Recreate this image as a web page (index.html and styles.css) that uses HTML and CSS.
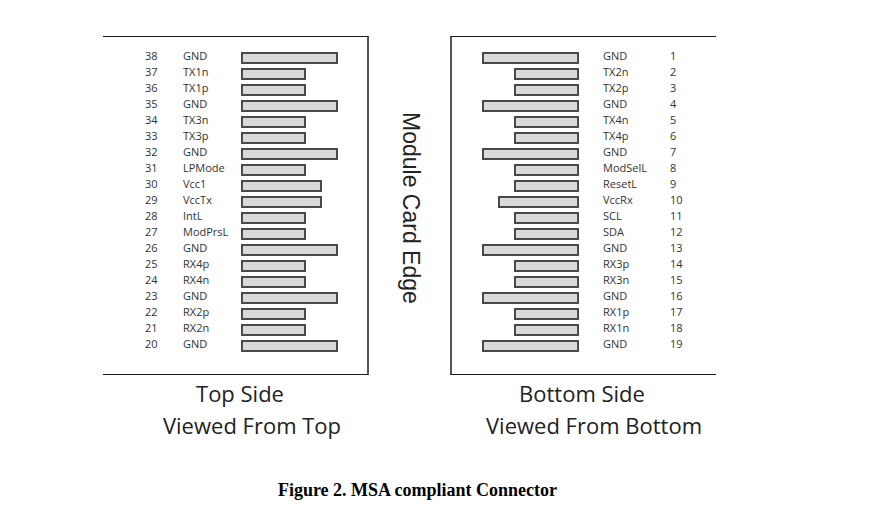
FILE: index.html
```html
<!DOCTYPE html>
<html lang="en">
<head>
<meta charset="utf-8">
<title>MSA compliant Connector</title>
<link rel="stylesheet" href="styles.css">
</head>
<body>
<div class="figure">
  <div class="diagram">
    <div class="side side-top">
      <div class="row"><span class="num">38</span><span class="name">GND</span><span class="bar long"></span></div>
      <div class="row"><span class="num">37</span><span class="name">TX1n</span><span class="bar short"></span></div>
      <div class="row"><span class="num">36</span><span class="name">TX1p</span><span class="bar short"></span></div>
      <div class="row"><span class="num">35</span><span class="name">GND</span><span class="bar long"></span></div>
      <div class="row"><span class="num">34</span><span class="name">TX3n</span><span class="bar short"></span></div>
      <div class="row"><span class="num">33</span><span class="name">TX3p</span><span class="bar short"></span></div>
      <div class="row"><span class="num">32</span><span class="name">GND</span><span class="bar long"></span></div>
      <div class="row"><span class="num">31</span><span class="name">LPMode</span><span class="bar short"></span></div>
      <div class="row"><span class="num">30</span><span class="name">Vcc1</span><span class="bar mid"></span></div>
      <div class="row"><span class="num">29</span><span class="name">VccTx</span><span class="bar mid"></span></div>
      <div class="row"><span class="num">28</span><span class="name">IntL</span><span class="bar short"></span></div>
      <div class="row"><span class="num">27</span><span class="name">ModPrsL</span><span class="bar short"></span></div>
      <div class="row"><span class="num">26</span><span class="name">GND</span><span class="bar long"></span></div>
      <div class="row"><span class="num">25</span><span class="name">RX4p</span><span class="bar short"></span></div>
      <div class="row"><span class="num">24</span><span class="name">RX4n</span><span class="bar short"></span></div>
      <div class="row"><span class="num">23</span><span class="name">GND</span><span class="bar long"></span></div>
      <div class="row"><span class="num">22</span><span class="name">RX2p</span><span class="bar short"></span></div>
      <div class="row"><span class="num">21</span><span class="name">RX2n</span><span class="bar short"></span></div>
      <div class="row"><span class="num">20</span><span class="name">GND</span><span class="bar long"></span></div>
    </div>
    <div class="edge"><span class="edge-label">Module Card Edge</span></div>
    <div class="side side-bottom">
      <div class="row"><span class="bar long"></span><span class="name">GND</span><span class="num">1</span></div>
      <div class="row"><span class="bar short"></span><span class="name">TX2n</span><span class="num">2</span></div>
      <div class="row"><span class="bar short"></span><span class="name">TX2p</span><span class="num">3</span></div>
      <div class="row"><span class="bar long"></span><span class="name">GND</span><span class="num">4</span></div>
      <div class="row"><span class="bar short"></span><span class="name">TX4n</span><span class="num">5</span></div>
      <div class="row"><span class="bar short"></span><span class="name">TX4p</span><span class="num">6</span></div>
      <div class="row"><span class="bar long"></span><span class="name">GND</span><span class="num">7</span></div>
      <div class="row"><span class="bar short"></span><span class="name">ModSelL</span><span class="num">8</span></div>
      <div class="row"><span class="bar short"></span><span class="name">ResetL</span><span class="num">9</span></div>
      <div class="row"><span class="bar mid"></span><span class="name">VccRx</span><span class="num">10</span></div>
      <div class="row"><span class="bar short"></span><span class="name">SCL</span><span class="num">11</span></div>
      <div class="row"><span class="bar short"></span><span class="name">SDA</span><span class="num">12</span></div>
      <div class="row"><span class="bar long"></span><span class="name">GND</span><span class="num">13</span></div>
      <div class="row"><span class="bar short"></span><span class="name">RX3p</span><span class="num">14</span></div>
      <div class="row"><span class="bar short"></span><span class="name">RX3n</span><span class="num">15</span></div>
      <div class="row"><span class="bar long"></span><span class="name">GND</span><span class="num">16</span></div>
      <div class="row"><span class="bar short"></span><span class="name">RX1p</span><span class="num">17</span></div>
      <div class="row"><span class="bar short"></span><span class="name">RX1n</span><span class="num">18</span></div>
      <div class="row"><span class="bar long"></span><span class="name">GND</span><span class="num">19</span></div>
    </div>
  </div>
  <div class="captions">
    <div class="caption caption-top">
      <div class="cap-line cap-line1">Top Side</div>
      <div class="cap-line cap-line2">Viewed From Top</div>
    </div>
    <div class="caption caption-bottom">
      <div class="cap-line cap-line1">Bottom Side</div>
      <div class="cap-line cap-line2">Viewed From Bottom</div>
    </div>
  </div>
  <p class="fig-title">Figure 2. MSA compliant Connector</p>
</div>
</body>
</html>
```

FILE: styles.css
```css
html, body {
  margin: 0;
  padding: 0;
  background: #ffffff;
}

.figure {
  width: 869px;
  padding-top: 36px;
}

.diagram {
  display: flex;
  margin-left: 103px;
}

.side {
  box-sizing: border-box;
  width: 266px;
  height: 339px;
  border-top: 1px solid #1a1a1a;
  border-bottom: 1px solid #1a1a1a;
  padding-top: 11px;
  font-family: "Open Sans", "Liberation Sans", sans-serif;
  font-size: 11px;
  color: #333333;
}

.side-top {
  border-right: 2px solid #555555;
  padding-left: 42px;
}

.side-bottom {
  border-left: 2px solid #555555;
}

.row {
  display: grid;
  height: 16px;
  line-height: 16px;
}

.side-top .row {
  grid-template-columns: 38px 58px auto;
}

.side-bottom .row {
  grid-template-columns: 127px 91px auto;
}

.side-bottom .bar {
  justify-self: end;
}

.side-bottom .name {
  padding-left: 24px;
}

.bar {
  box-sizing: border-box;
  height: 12px;
  margin-top: 4px;
  background: #d9d9d9;
  border: 2px solid #4a4a4a;
}

.bar.long {
  width: 97px;
}

.bar.mid {
  width: 81px;
}

.bar.short {
  width: 65px;
}

.edge {
  width: 81px;
  height: 339px;
  display: flex;
  align-items: center;
  justify-content: center;
  padding-top: 4px;
  box-sizing: border-box;
}

.edge-label {
  writing-mode: vertical-rl;
  font-family: "Liberation Sans", Arial, sans-serif;
  font-size: 23px;
  color: #222222;
  padding-left: 2px;
}

.captions {
  display: flex;
  margin-left: 103px;
  margin-top: 2px;
}

.caption {
  width: 266px;
  font-family: "Open Sans", "Liberation Sans", sans-serif;
  font-size: 22px;
  line-height: 32px;
  color: #222222;
  text-align: center;
}

.caption-bottom {
  margin-left: 76px;
}

.cap-line1 {
  padding-left: 8px;
}

.cap-line2 {
  padding-left: 32px;
}

.fig-title {
  margin: 38px 0 0 0;
  padding-left: 15px;
  text-align: center;
  width: 805px;
  font-family: "Liberation Serif", "Times New Roman", serif;
  font-weight: bold;
  font-size: 18px;
  line-height: 22px;
  color: #000000;
}
```
